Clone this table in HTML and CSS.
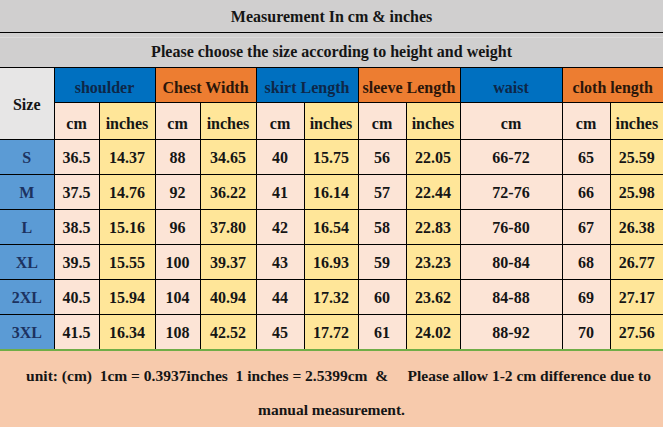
FILE: index.html
```html
<!DOCTYPE html>
<html>
<head>
<meta charset="utf-8">
<link rel="stylesheet" href="styles.css">
</head>
<body>
<div class="sheet">
  <table class="chart">
    <colgroup>
      <col class="c54"><col class="c45"><col class="c56"><col class="c45"><col class="c56"><col class="c48"><col class="c54"><col class="c48"><col class="c54"><col class="c102"><col class="c48"><col class="c53">
    </colgroup>
    <tr class="title-row"><td colspan="12">Measurement In cm &amp; inches</td></tr>
    <tr class="sub-row"><td colspan="12">Please choose the size according to height and weight</td></tr>
    <tr class="head-row">
      <td rowspan="2" class="size-head">Size</td>
      <td colspan="2" class="blue">shoulder</td>
      <td colspan="2" class="orange">Chest Width</td>
      <td colspan="2" class="blue">skirt Length</td>
      <td colspan="2" class="orange">sleeve Length</td>
      <td class="blue">waist</td>
      <td colspan="2" class="orange">cloth length</td>
    </tr>
    <tr class="unit-row">
      <td class="pk">cm</td><td class="yl">inches</td>
      <td class="pk">cm</td><td class="yl">inches</td>
      <td class="pk">cm</td><td class="yl">inches</td>
      <td class="pk">cm</td><td class="yl">inches</td>
      <td class="pk">cm</td>
      <td class="pk">cm</td><td class="yl">inches</td>
    </tr>
    <tr class="data-row"><td class="sz">S</td><td class="pk">36.5</td><td class="yl">14.37</td><td class="pk">88</td><td class="yl">34.65</td><td class="pk">40</td><td class="yl">15.75</td><td class="pk">56</td><td class="yl">22.05</td><td class="pk">66-72</td><td class="pk">65</td><td class="yl">25.59</td></tr>
    <tr class="data-row"><td class="sz">M</td><td class="pk">37.5</td><td class="yl">14.76</td><td class="pk">92</td><td class="yl">36.22</td><td class="pk">41</td><td class="yl">16.14</td><td class="pk">57</td><td class="yl">22.44</td><td class="pk">72-76</td><td class="pk">66</td><td class="yl">25.98</td></tr>
    <tr class="data-row"><td class="sz">L</td><td class="pk">38.5</td><td class="yl">15.16</td><td class="pk">96</td><td class="yl">37.80</td><td class="pk">42</td><td class="yl">16.54</td><td class="pk">58</td><td class="yl">22.83</td><td class="pk">76-80</td><td class="pk">67</td><td class="yl">26.38</td></tr>
    <tr class="data-row"><td class="sz">XL</td><td class="pk">39.5</td><td class="yl">15.55</td><td class="pk">100</td><td class="yl">39.37</td><td class="pk">43</td><td class="yl">16.93</td><td class="pk">59</td><td class="yl">23.23</td><td class="pk">80-84</td><td class="pk">68</td><td class="yl">26.77</td></tr>
    <tr class="data-row"><td class="sz">2XL</td><td class="pk">40.5</td><td class="yl">15.94</td><td class="pk">104</td><td class="yl">40.94</td><td class="pk">44</td><td class="yl">17.32</td><td class="pk">60</td><td class="yl">23.62</td><td class="pk">84-88</td><td class="pk">69</td><td class="yl">27.17</td></tr>
    <tr class="data-row last"><td class="sz">3XL</td><td class="pk">41.5</td><td class="yl">16.34</td><td class="pk">108</td><td class="yl">42.52</td><td class="pk">45</td><td class="yl">17.72</td><td class="pk">61</td><td class="yl">24.02</td><td class="pk">88-92</td><td class="pk">70</td><td class="yl">27.56</td></tr>
  </table>
  <div class="footer">
    <p class="note first">unit: (cm)  1cm = 0.3937inches  1 inches = 2.5399cm  &amp;     Please allow 1-2 cm difference due to</p>
    <p class="note">manual measurement.</p>
  </div>
</div>
</body>
</html>
```

FILE: styles.css
```css
html, body {
  margin: 0;
  padding: 0;
  background: #f7caac;
}
.sheet {
  width: 663px;
  height: 427px;
  overflow: hidden;
  font-family: "Liberation Serif", "Times New Roman", serif;
  font-weight: bold;
  color: #151515;
}
.chart {
  border-collapse: collapse;
  table-layout: fixed;
  width: 663px;
}
.c54 { width: 54px; }
.c45 { width: 45px; }
.c56 { width: 56px; }
.c48 { width: 48px; }
.c53 { width: 53px; }
.c102 { width: 102px; }
.chart td {
  padding: 0;
  text-align: center;
  font-size: 16px;
  border: 1px solid #000;
}
.chart td:first-child { border-left: none; }
.chart td:last-child { border-right: none; }
.title-row td {
  background: #d0cfcf;
  height: 31px;
  padding-top: 1px;
  border-top: none;
  border-bottom: 1px solid #000;
}
.sub-row td {
  background: #d0cfcf;
  height: 30px;
  padding-top: 4px;
  border-top: 1px solid #000;
  box-shadow: inset 0 4px 0 #d0cfcf, inset 0 5px 0 #dcdbdb;
}
.head-row td {
  height: 29px;
  padding-top: 5px;
}
.head-row td.size-head {
  padding-top: 2px;
}
.unit-row td {
  height: 31px;
  padding-top: 5px;
}
.data-row td {
  height: 32px;
  padding-top: 2px;
}
.data-row.last td {
  border-bottom: 2px solid #70ad47;
}
.size-head {
  background: #e7e6e6;
  color: #141414;
}
.blue {
  background: #0070c0;
  color: #0e2748;
}
.orange {
  background: #ed7d31;
  color: #2a160a;
}
.pk { background: #fce4d6; }
.yl { background: #ffe699; }
.sz {
  background: #5b9bd5;
  color: #1c3260;
}
.footer {
  background: #f7caac;
  padding-top: 8px;
  text-align: center;
}
.note {
  margin: 0;
  font-size: 15.5px;
  line-height: 34px;
  white-space: pre;
  color: #151515;
}
.note.first {
  padding-left: 14px;
}
```
